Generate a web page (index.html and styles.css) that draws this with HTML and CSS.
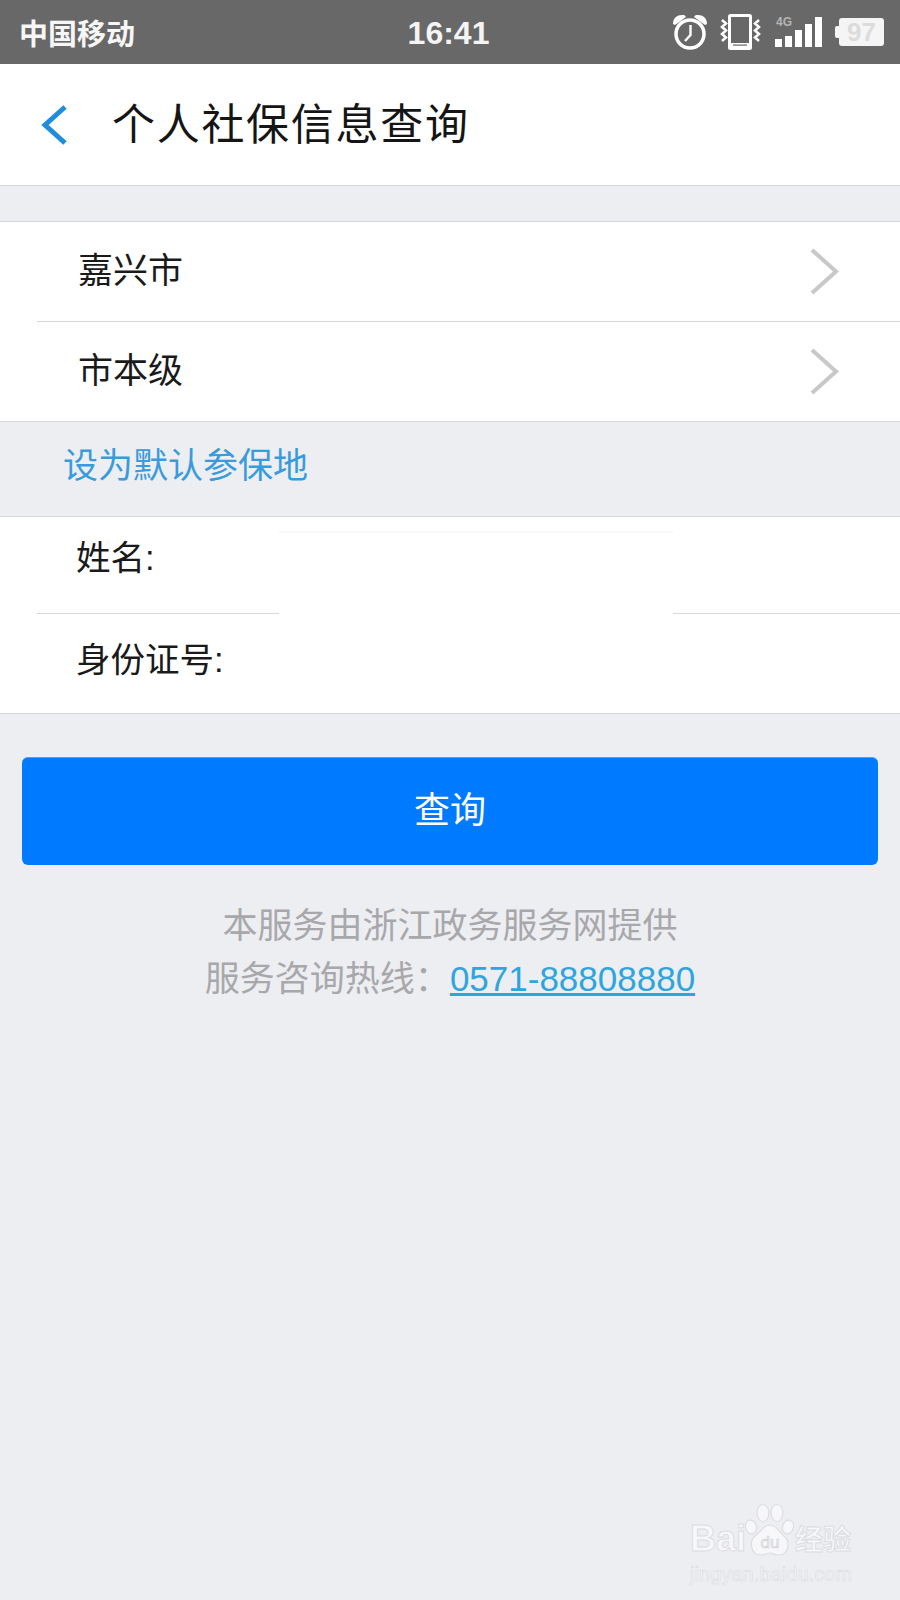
FILE: index.html
```html
<!DOCTYPE html>
<html lang="zh-CN">
<head>
    <meta charset="UTF-8">
    <meta name="viewport" content="width=device-width, initial-scale=1.0">
    <title>个人社保信息查询</title>
    <link rel="stylesheet" href="styles.css">
</head>
<body>
    <!-- Status bar -->
    <div class="status-bar">
        <span class="carrier">中国移动</span>
        <span class="clock">16:41</span>
        <div class="status-icons">
            <svg class="icon-alarm" width="34" height="36" viewBox="0 0 34 36">
                <circle cx="17" cy="20" r="14" fill="none" stroke="#fff" stroke-width="3.5"/>
                <path d="M17.5 11v10l-5.500 6" fill="none" stroke="#fff" stroke-width="2.4"/>
                <path d="M0 10 C0 3 6 0 12 1.500 L13 3 L2 11 Z M34 10 C34 3 28 0 22 1.500 L21 3 L32 11 Z" fill="#fff"/>
            </svg>
            <svg class="icon-vibrate" width="41" height="36" viewBox="0 0 41 36">
                <rect x="9.500" y="1.500" width="21" height="33" rx="1" fill="none" stroke="#fff" stroke-width="3"/>
                <rect x="11" y="29" width="18" height="6" fill="#fff"/>
                <rect x="13" y="30.500" width="14" height="1.200" fill="#686868"/>
                <path d="M2 6l4 3.500-4 3.500 4 3.500-4 3.500 4 3.500-4 3.500M39 6l-4 3.500 4 3.500-4 3.500 4 3.500-4 3.500 4 3.500" fill="none" stroke="#fff" stroke-width="2.500"/>
            </svg>
            <div class="signal">
                <span class="net-type">4G</span>
                <i class="bar bar-1"></i>
                <i class="bar bar-2"></i>
                <i class="bar bar-3"></i>
                <i class="bar bar-4"></i>
                <i class="bar bar-5"></i>
            </div>
            <div class="battery"><span>97</span></div>
        </div>
    </div>

    <!-- Header -->
    <div class="header">
        <svg class="back" width="28" height="40" viewBox="0 0 28 40">
            <path d="M25 2L5 20l20 18" fill="none" stroke="#1f8ddb" stroke-width="5"/>
        </svg>
        <h1>个人社保信息查询</h1>
    </div>

    <!-- Area pickers -->
    <div class="list area-list">
        <div class="row">
            <span class="row-label">嘉兴市</span>
            <svg class="chevron" width="29" height="47" viewBox="0 0 29 47">
                <path d="M2 2l24 21.500L2 45" fill="none" stroke="#c8c8c8" stroke-width="4"/>
            </svg>
        </div>
        <div class="row">
            <span class="row-label">市本级</span>
            <svg class="chevron" width="29" height="47" viewBox="0 0 29 47">
                <path d="M2 2l24 21.500L2 45" fill="none" stroke="#c8c8c8" stroke-width="4"/>
            </svg>
        </div>
    </div>

    <div class="default-link">设为默认参保地</div>

    <!-- Form -->
    <div class="list form-list">
        <div class="row field field-name">姓名:</div>
        <div class="row field field-id">身份证号:</div>
        <div class="blanked"></div>
    </div>

    <button class="submit-btn">查询</button>

    <div class="footer">
        <p>本服务由浙江政务服务网提供</p>
        <p>服务咨询热线：<a href="#" class="hotline">0571-88808880</a></p>
    </div>

    <!-- Watermark -->
    <div class="watermark">
        <div class="wm-top">
            <span class="wm-bai">Bai</span>
            <svg class="wm-paw" width="50" height="54" viewBox="0 0 50 54">
                <g fill="#f7f7f9" stroke="#dcdde1" stroke-width="1.2">
                    <ellipse cx="6" cy="24" rx="5.500" ry="7" transform="rotate(-15 6 24)"/>
                    <ellipse cx="18" cy="10" rx="6" ry="8.500"/>
                    <ellipse cx="32" cy="10" rx="6" ry="8.500"/>
                    <ellipse cx="43" cy="24" rx="5.500" ry="7" transform="rotate(15 43 24)"/>
                    <path d="M25 22c7 0 9 7 14 11 6 5 6 19-6 19-4 0-5-2-8-2s-5 2-9 2C5 52 4 38 10 33c6-4 8-11 15-11z"/>
                </g>
                <text x="25" y="45" text-anchor="middle" class="wm-du">du</text>
            </svg>
            <span class="wm-cn">经验</span>
        </div>
        <div class="wm-url">jingyan.baidu.com</div>
    </div>
</body>
</html>
```

FILE: styles.css
```css
:root {
    --page-bg: #edeef2;
    --line: #d6d7da;
    --blue-link: #3a9bdc;
    --cjk: "Liberation Sans", "Noto Sans CJK SC", sans-serif;
}

* {
    box-sizing: border-box;
}

body {
    margin: 0;
    height: 1600px;
    position: relative;
    overflow: hidden;
    font-family: var(--cjk);
    background: var(--page-bg);
    color: #1a1a1a;
}

/* status bar */
.status-bar {
    height: 64px;
    background: #686868;
    color: #fff;
    display: grid;
    grid-template-columns: 1fr auto 1fr;
    align-items: center;
    padding: 0 16px 0 19px;
}

.carrier {
    font-size: 29px;
    font-weight: 700;
    color: #f6f6f6;
}

.clock {
    font-size: 32px;
    font-weight: 700;
    color: #f4f4f4;
    padding-top: 2px;
    margin-right: 6px;
}

.status-icons {
    display: flex;
    justify-content: flex-end;
    align-items: center;
}

.icon-alarm {
    margin-right: 13px;
}

.icon-vibrate {
    margin-right: 14px;
}

.signal {
    position: relative;
    width: 47px;
    height: 30px;
    margin-right: 17px;
    display: flex;
    align-items: flex-end;
    gap: 3px;
}

.net-type {
    position: absolute;
    left: 1px;
    top: -2px;
    font-size: 12px;
    line-height: 14px;
    font-weight: 700;
    color: #b4b4b4;
}

.bar {
    width: 7px;
    background: #fff;
}

.bar-1 { height: 8px; }
.bar-2 { height: 11px; }
.bar-3 { height: 17px; }
.bar-4 { height: 23px; }
.bar-5 { height: 30px; }

.battery {
    position: relative;
    width: 45px;
    height: 28px;
    background: #f5f5f5;
    border-radius: 3px;
    text-align: center;
    font-size: 26px;
    line-height: 28px;
    font-weight: 700;
    color: #dcdcdc;
}

.battery::before {
    content: '';
    position: absolute;
    left: -4px;
    top: 8px;
    width: 4px;
    height: 12px;
    background: #f5f5f5;
    border-radius: 2px 0 0 2px;
}

/* header */
.header {
    height: 122px;
    background: #fff;
    border-bottom: 1px solid var(--line);
    display: flex;
    align-items: center;
    padding-left: 40px;
}

.header h1 {
    margin: 0 0 8px 44px;
    font-size: 43px;
    font-weight: 400;
    letter-spacing: 1.7px;
    color: #151515;
}

/* lists */
.list {
    position: relative;
    background: #fff;
    border-top: 1px solid var(--line);
    border-bottom: 1px solid var(--line);
}

.area-list {
    margin-top: 35px;
}

.row {
    height: 99px;
    margin-left: 37px;
    padding: 0 61px 0 41px;
    display: flex;
    align-items: center;
    justify-content: space-between;
    font-size: 35px;
}

.row + .row {
    height: 100px;
    border-top: 1px solid var(--line);
}

.row-label {
    margin-bottom: 8px;
}

.default-link {
    height: 94px;
    padding: 0 0 14px 63px;
    display: flex;
    align-items: center;
    font-size: 35px;
    color: var(--blue-link);
}

.field {
    padding-left: 39px;
    justify-content: flex-start;
    font-size: 34.5px;
}

.field-name {
    height: 96px;
    padding-bottom: 20px;
}

.row.field-id {
    padding-bottom: 14px;
}

/* covers the values that were blanked out in the screenshot */
.blanked {
    position: absolute;
    left: 279px;
    top: 14px;
    width: 394px;
    height: 120px;
    background: #fff;
    border-top: 2px solid #f8f8f8;
}

/* button and footer */
.submit-btn {
    display: block;
    width: 856px;
    height: 108px;
    margin: 43px 22px 0;
    padding: 0 0 10px;
    background: #007aff;
    border: none;
    border-top: 1px solid #4da0f0;
    border-radius: 6px;
    color: #fff;
    font-family: var(--cjk);
    font-size: 36px;
}

.footer {
    margin-top: 34px;
    text-align: center;
    font-size: 35px;
    line-height: 53px;
    color: #a8a8ab;
}

.footer p {
    margin: 0;
}

.hotline {
    color: #2fa5dc;
    text-decoration: underline;
}

/* baidu watermark */
.watermark {
    position: absolute;
    left: 690px;
    top: 1503px;
    width: 165px;
    color: #f7f7f9;
}

.wm-top {
    display: flex;
    align-items: flex-end;
    height: 54px;
}

.wm-bai {
    width: 55px;
    font-size: 36px;
    line-height: 36px;
    font-weight: 700;
    -webkit-text-stroke: 1px #dcdde1;
}

.wm-du {
    font-family: "Liberation Sans", sans-serif;
    font-size: 17px;
    fill: #ecedf1;
    stroke: #cfd0d4;
    stroke-width: 0.6;
}

.wm-cn {
    font-size: 28px;
    line-height: 32px;
    font-weight: 700;
    -webkit-text-stroke: 1px #dcdde1;
}

.wm-url {
    margin-top: 5px;
    font-size: 19.5px;
    line-height: 24px;
    letter-spacing: 0.3px;
    -webkit-text-stroke: 0.7px #dcdde1;
}
```
